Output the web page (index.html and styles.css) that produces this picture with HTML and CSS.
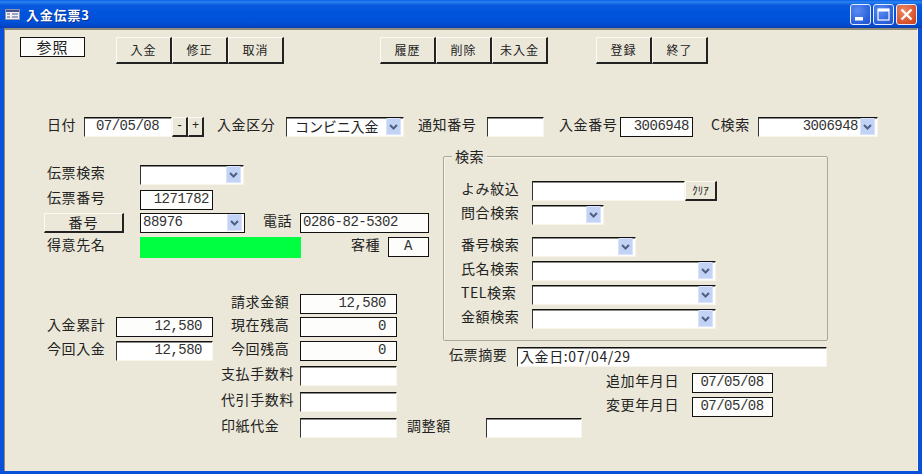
FILE: index.html
```html
<!DOCTYPE html>
<html lang="ja">
<head>
<meta charset="utf-8">
<title>入金伝票3</title>
<link rel="stylesheet" href="styles.css">
</head>
<body>
<svg class="defs" width="0" height="0" aria-hidden="true"><defs>
<symbol id="chev" viewBox="0 0 15 17"><rect x="0" y="0" width="15" height="17" rx="1.5" fill="#c3d3f6"/><rect x="0.5" y="0.5" width="14" height="16" rx="1.5" fill="none" stroke="#d9e3fa"/><path d="M4 7l3.5 3.5L11 7" fill="none" stroke="#4d6185" stroke-width="2"/></symbol>
</defs></svg>
<div class="window">
  <header class="titlebar">
    <svg class="appicon" width="15" height="11" viewBox="0 0 15 11"><rect x="0.5" y="0.5" width="14" height="10" fill="#f2f2f6" stroke="#8a93b0"/><rect x="1" y="1" width="13" height="2" fill="#46528a"/><path d="M2 5h3M2 8h3M7 5h6M7 8h6" stroke="#46528a"/></svg>
    <span class="title">入金伝票3</span>
    <div class="winbtns">
      <span class="winbtn"><svg width="21" height="21" viewBox="0 0 21 21"><rect x="5" y="13" width="8" height="3.5" fill="#fff"/></svg></span>
      <span class="winbtn"><svg width="21" height="21" viewBox="0 0 21 21"><rect x="5" y="5" width="11" height="11" fill="none" stroke="#fff" stroke-width="1.2"/><rect x="5" y="5" width="11" height="2.5" fill="#fff"/></svg></span>
      <span class="winbtn close"><svg width="21" height="21" viewBox="0 0 21 21"><path d="M5.5 5.5l10 10M15.5 5.5l-10 10" stroke="#fff" stroke-width="2.4"/></svg></span>
    </div>
  </header>
  <main class="client">
    <div class="toolbar">
      <div class="box ref">参照</div>
      <div class="btngroup g1"><button class="btn">入金</button><button class="btn">修正</button><button class="btn">取消</button></div>
      <div class="btngroup g2"><button class="btn">履歴</button><button class="btn">削除</button><button class="btn">未入金</button></div>
      <div class="btngroup g3"><button class="btn">登録</button><button class="btn">終了</button></div>
    </div>

    <div class="daterow">
      <span class="lbl w37">日付</span>
      <div class="sunken num center w88">07/05/08</div>
      <button class="btn step">-</button><button class="btn step">+</button>
      <span class="lbl w69 ml13">入金区分</span>
      <div class="combo w118"><span class="jp">コンビニ入金</span><svg class="arrow"><use href="#chev"/></svg></div>
      <span class="lbl w69 ml14">通知番号</span>
      <div class="sunken w57"></div>
      <span class="lbl w61 ml15">入金番号</span>
      <div class="box num right w73">3006948</div>
      <span class="lbl w47 ml18">C検索</span>
      <div class="combo w120 num right"><span>3006948</span><svg class="arrow"><use href="#chev"/></svg></div>
    </div>

    <div class="columns">
      <section class="leftcol">
        <div class="custgrid">
          <span class="lbl pl3">伝票検索</span>
          <div class="combo w104"><svg class="arrow"><use href="#chev"/></svg></div>
          <span></span>

          <span class="lbl pl3">伝票番号</span>
          <div class="box num right w73">1271782</div>
          <span></span>

          <button class="btn wide">番号</button>
          <div class="combo box-combo w105 num"><span>88976</span><svg class="arrow"><use href="#chev"/></svg></div>
          <div class="tel"><span class="lbl w37">電話</span><div class="box num w129">0286-82-5302</div></div>

          <span class="lbl pl3">得意先名</span>
          <div class="green"></div>
          <div class="kind"><span class="lbl w37">客種</span><div class="box num center w41">A</div></div>
        </div>

        <div class="amounts">
          <div class="amount-left">
            <div class="amt"><span class="lbl w69">入金累計</span><div class="box num right money w97">12,580</div></div>
            <div class="amt"><span class="lbl w69">今回入金</span><div class="sunken num right money w97">12,580</div></div>
          </div>
          <div class="amount-right">
            <div class="amt"><span class="lbl w79 pl10">請求金額</span><div class="box num right money w97">12,580</div></div>
            <div class="amt"><span class="lbl w79 pl10">現在残高</span><div class="box num right money w97">0</div></div>
            <div class="amt"><span class="lbl w79 pl10">今回残高</span><div class="box num right money w97">0</div></div>
            <div class="amt"><span class="lbl w79">支払手数料</span><div class="sunken w97"></div></div>
            <div class="amt"><span class="lbl w79">代引手数料</span><div class="sunken w97"></div></div>
            <div class="amt"><span class="lbl w79">印紙代金</span><div class="sunken w97"></div><span class="lbl w79 ml10">調整額</span><div class="sunken w96"></div></div>
          </div>
        </div>
      </section>

      <section class="rightcol">
        <div class="group">
          <span class="legend">検索</span>
          <div class="search">
            <span class="lbl">よみ紋込</span>
            <div class="clearrow"><div class="sunken w153"></div><button class="btn clear">ｸﾘｱ</button></div>
            <span class="lbl">問合検索</span>
            <div class="combo w72"><svg class="arrow"><use href="#chev"/></svg></div>
            <span class="lbl">番号検索</span>
            <div class="combo w104"><svg class="arrow"><use href="#chev"/></svg></div>
            <span class="lbl">氏名検索</span>
            <div class="combo w184"><svg class="arrow"><use href="#chev"/></svg></div>
            <span class="lbl">TEL検索</span>
            <div class="combo w184"><svg class="arrow"><use href="#chev"/></svg></div>
            <span class="lbl">金額検索</span>
            <div class="combo w184"><svg class="arrow"><use href="#chev"/></svg></div>
          </div>
        </div>
        <div class="memo"><span class="lbl w68">伝票摘要</span><div class="sunken memotext">入金日:07/04/29</div></div>
        <div class="stamp first"><span class="lbl w86">追加年月日</span><div class="box num center w81">07/05/08</div></div>
        <div class="stamp"><span class="lbl w86">変更年月日</span><div class="box num center w81">07/05/08</div></div>
      </section>
    </div>
  </main>
</div>
</body>
</html>
```
FILE: styles.css
```css
* { box-sizing: border-box; }
html, body { margin: 0; padding: 0; }
body {
  width: 922px; height: 474px; overflow: hidden;
  font-family: "Noto Sans CJK JP", "Liberation Sans", sans-serif;
  font-size: 14px; color: #222;
}
.defs { position: absolute; }
.window { width: 922px; height: 474px; display: flex; flex-direction: column; background: #0a50d8; }

.titlebar {
  height: 28px; flex: none; display: flex; align-items: center; padding: 0 5px;
  background: linear-gradient(#0a5fe8 0, #2a83f0 2px, #0b5ae0 5px, #0054dc 12px, #0050d8 22px, #0347c8 26px, #0a3fb0 28px);
}
.appicon { flex: none; }
.title { margin-left: 6px; color: #fff; font-size: 13px; font-weight: 700; line-height: 1; letter-spacing: .8px; text-shadow: 1px 1px 0 #0a2f90; }
.winbtns { margin-left: auto; display: flex; gap: 2px; }
.winbtn {
  width: 21px; height: 21px; border: 1px solid #e8eeff; border-radius: 3px; display: block;
  background: radial-gradient(circle at 35% 30%, #5b8cf0, #2a5fdc 70%, #2450c0);
}
.winbtn svg { display: block; margin: -1px; }
.winbtn.close { background: radial-gradient(circle at 35% 30%, #eb8a66, #d8512c 70%, #c03c1c); }

.client {
  flex: 1; min-height: 0; background: #ebe8d9;
  margin: 0 4px 3px; border-top: 2px solid #8f8c7c; border-left: 1px solid #8f8c7c; border-right: 1px solid #f4f2e8;
  padding-left: 15px;
}
.toolbar { display: flex; align-items: flex-start; padding-top: 7px; height: 34px; }
.ref { width: 65px; height: 22px; font-size: 15px; justify-content: center; line-height: 1; padding-bottom: 2px; letter-spacing: 1px; }
.btngroup { display: flex; }
.g1 { margin-left: 31px; }
.g2 { margin-left: 96px; }
.g3 { margin-left: 48px; }

.btn {
  font: inherit; font-size: 12px; color: #222; padding: 0 0 1px; width: 56px; height: 27px;
  background: #ebe8d9;
  border: 1px solid; border-color: #fbfaf3 #222 #222 #fbfaf3;
  border-bottom-width: 2px; border-right-width: 2px;
  display: flex; align-items: center; justify-content: center; letter-spacing: 1px; line-height: 1;
}
.btn.step { width: 16px; height: 20px; font-family: "Liberation Mono", monospace; font-size: 12px; letter-spacing: 0; }
.btn.wide { width: 80px; height: 20px; font-size: 14px; letter-spacing: 1px; }
.btn.clear { width: 32px; height: 20px; font-size: 11px; letter-spacing: 0; }

.lbl { display: block; flex: none; line-height: 15px; white-space: nowrap; letter-spacing: .6px; font-size: 14px; color: #222; }
.w37 { width: 37px; } .w41 { width: 41px; } .w47 { width: 47px; } .w57 { width: 57px; } .w61 { width: 61px; }
.w68 { width: 68px; } .w69 { width: 69px; } .w72 { width: 72px; } .w73 { width: 73px; } .w79 { width: 79px; }
.w81 { width: 81px; } .w86 { width: 86px; } .w88 { width: 88px; } .w96 { width: 96px; } .w97 { width: 97px; }
.w104 { width: 104px; } .w105 { width: 105px; } .w118 { width: 118px; } .w120 { width: 120px; } .w129 { width: 129px; }
.w153 { width: 153px; } .w184 { width: 184px; }
.ml10 { margin-left: 10px; } .ml13 { margin-left: 13px; } .ml14 { margin-left: 14px; } .ml15 { margin-left: 15px; } .ml18 { margin-left: 18px; }
.pl3 { padding-left: 3px; } .pl10 { padding-left: 10px; }

.box, .sunken, .combo {
  height: 20px; flex: none; background: #fff; display: flex; align-items: center; overflow: hidden; white-space: nowrap;
}
.box { border: 1px solid #111; background: #fdfdfb; }
.sunken, .combo {
  border: 1px solid; border-color: #111 #f8f6ec #f8f6ec #333;
  box-shadow: inset 0 1px 0 #8a8a84;
}
.combo { position: relative; padding-right: 18px; }
.box-combo { border-color: #111; box-shadow: none; }
.arrow { position: absolute; right: 2px; top: 0; width: 15px; height: 17px; }
.num { font-family: "Liberation Mono", monospace; font-size: 14px; letter-spacing: -.5px; padding: 0 3px 2px 2px; color: #333; }
.right { justify-content: flex-end; }
.center { justify-content: center; }
.money { padding-right: 10px; }
.combo.num { padding-right: 19px; }
.jp { padding: 0 0 3px 8px; letter-spacing: -.1px; font-size: 14px; line-height: 1; color: #222; }

.daterow { display: flex; align-items: flex-start; height: 21px; margin-top: 53px; padding-left: 27px; }

.columns { display: flex; margin-top: 18px; margin-left: 24px; }
.leftcol { width: 399px; flex: none; padding-top: 9px; }
.custgrid {
  display: grid; grid-template-columns: 96px 123px 170px; grid-template-rows: 25px 23px 24px 21px;
  width: 385px; align-items: start;
}
.tel, .kind { display: flex; align-items: flex-start; }
.kind { padding-left: 88px; }
.green { height: 21px; width: 161px; background: #00ff40; }

.amounts { display: flex; margin-top: 36px; }
.amount-left { width: 177px; flex: none; padding: 23px 0 0 3px; display: grid; grid-template-rows: 24px 20px; }
.amount-right { display: grid; grid-template-rows: 23px 24px 25px 26px 26px 20px; }
.amt { display: flex; align-items: flex-start; }

.rightcol { flex: none; width: 385px; }
.group { position: relative; width: 385px; height: 185px; border: 1px solid #a9a795; border-radius: 2px; box-shadow: inset 1px 1px 0 #f7f5ea; padding: 24px 0 0 17px; }
.legend { position: absolute; left: 8px; top: -9px; background: #ebe8d9; padding: 0 3px; line-height: 16px; font-size: 14px; letter-spacing: .6px; }
.search { display: grid; grid-template-columns: 71px 1fr; grid-template-rows: 24px 32px 24px 24px 24px 20px; align-items: start; }
.clearrow { display: flex; }
.memo { display: flex; align-items: flex-start; margin: 6px 0 0 6px; }
.memotext { width: 310px; height: 20px; padding: 0 0 2px 2px; letter-spacing: .6px; font-size: 14px; line-height: 1; }
.stamp { display: flex; align-items: flex-start; margin: 4px 0 0 163px; }
.stamp.first { margin-top: 6px; }
```
